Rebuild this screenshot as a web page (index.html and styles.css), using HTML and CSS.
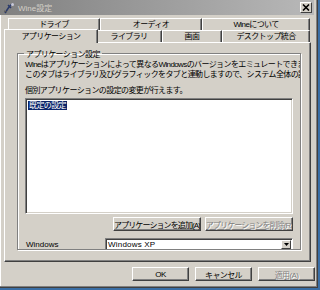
FILE: index.html
```html
<!DOCTYPE html>
<html lang="ja">
<head>
    <title>Wine設定</title>
    <link rel="stylesheet" href="styles.css">
</head>
<body>
    <div class="window">
        <div class="titlebar">
            <svg class="app-icon" width="12" height="12" viewBox="0 0 12 12">
                <path d="M2 11 L6 5 M6 5 L9 2 M5 3 L8 6" stroke="#2a3a6a" stroke-width="1.5" fill="none"/>
                <path d="M1 9 L4 10" stroke="#555" stroke-width="1"/>
                <circle cx="9.5" cy="2.5" r="1.5" fill="#c8c8d8"/>
            </svg>
            <span class="title">Wine設定</span>
            <div class="close-btn">
                <svg width="8" height="7" viewBox="0 0 8 7">
                    <path d="M1 0.5 L7 6.5 M7 0.5 L1 6.5" stroke="#000" stroke-width="1.6"/>
                </svg>
            </div>
        </div>

        <div class="content">
            <div class="tabs">
                <div class="tab-row back">
                    <div class="tab w-drive">ドライブ</div>
                    <div class="tab w-audio">オーディオ</div>
                    <div class="tab w-about">Wineについて</div>
                </div>
                <div class="tab-row front">
                    <div class="tab selected w-apps">アプリケーション</div>
                    <div class="tab w-libs">ライブラリ</div>
                    <div class="tab w-screen">画面</div>
                    <div class="tab w-desktop">デスクトップ統合</div>
                </div>
            </div>

            <div class="panel">
                <fieldset class="group">
                    <legend>アプリケーション設定</legend>
                    <p class="desc">Wineはアプリケーションによって異なるWindowsのバージョンをエミュレートできます。<br>このタブはライブラリ及びグラフィックをタブと連動しますので、システム全体の設定も変更されます。</p>
                    <p class="hint">個別アプリケーションの設定の変更が行えます。</p>
                    <div class="listbox">
                        <span class="item-selected">既定の設定</span>
                    </div>
                    <div class="list-buttons">
                        <button class="btn"><span>アプリケーションを追加(A)</span></button>
                        <button class="btn disabled"><span>アプリケーションを削除(R)</span></button>
                    </div>
                    <div class="version-row">
                        <span class="version-label">Windows</span>
                        <div class="combo">
                            <span class="combo-text">Windows XP</span>
                            <div class="combo-arrow">
                                <svg width="5" height="3" viewBox="0 0 5 3"><path d="M0 0 H5 L2.5 3 Z" fill="#000"/></svg>
                            </div>
                        </div>
                    </div>
                </fieldset>
            </div>

            <div class="dialog-buttons">
                <button class="btn wide"><span>OK</span></button>
                <button class="btn wide"><span>キャンセル</span></button>
                <button class="btn wide disabled"><span>適用(A)</span></button>
            </div>
        </div>
    </div>
</body>
</html>
```

FILE: styles.css
```css
body {
    margin: 0;
    padding: 0;
    width: 320px;
    height: 290px;
    background-color: #3a6ea5;
    overflow: hidden;
    font-family: "Liberation Sans", "Noto Sans CJK JP", sans-serif;
    font-size: 8px;
    color: #000;
}

.window {
    box-sizing: border-box;
    width: 318px;
    height: 288px;
    background-color: #d4d0c8;
    border-right: 1px solid #404040;
    border-bottom: 1px solid #404040;
    box-shadow: inset -1px -1px 0 #808080, inset 1px 0 0 #ffffff;
}

.titlebar {
    height: 15px;
    margin-right: 3px;
    background: linear-gradient(to right, #808080, #b8b8b8);
    display: flex;
    align-items: center;
    padding-left: 3px;
}

.app-icon {
    margin-right: 3px;
}

.title {
    color: #d4d0c8;
    font-size: 8px;
    flex: 1;
}

.close-btn {
    width: 10px;
    height: 9px;
    margin-right: 2px;
    background-color: #d4d0c8;
    border: 1px solid;
    border-color: #ffffff #404040 #404040 #ffffff;
    display: flex;
    align-items: center;
    justify-content: center;
}

.content {
    padding: 3px 6px 0 4px;
}

.tab-row {
    display: flex;
    height: 12px;
}

.tab-row.back {
    margin-left: 4px;
}

.tab-row.front {
    margin-left: 2px;
}

.tab {
    box-sizing: border-box;
    height: 12px;
    border-top: 1px solid #ffffff;
    border-left: 1px solid #ffffff;
    border-right: 1px solid #404040;
    box-shadow: inset -1px 0 0 #808080;
    text-align: center;
    line-height: 11px;
    letter-spacing: -0.6px;
}

.tab.selected {
    height: 14px;
    margin-top: -1px;
    margin-left: -2px;
    margin-right: -2px;
    position: relative;
    z-index: 1;
    background-color: #d4d0c8;
    padding-top: 1px;
}

.w-drive { width: 92px; }
.w-audio { width: 102px; }
.w-about { width: 108px; }
.w-apps { width: 94px; }
.w-libs { width: 66px; }
.w-screen { width: 60px; }
.w-desktop { width: 88px; }

.panel {
    height: 220px;
    box-sizing: border-box;
    border-top: 1px solid #ffffff;
    border-left: 1px solid #ffffff;
    border-right: 1px solid #404040;
    border-bottom: 1px solid #404040;
    box-shadow: inset -1px -1px 0 #808080;
    padding: 5px 9px 0 12px;
}

.group {
    margin: 0;
    min-width: 0;
    height: 202px;
    box-sizing: border-box;
    border: 1px solid #808080;
    box-shadow: 1px 1px 0 #ffffff, inset 1px 1px 0 #ffffff;
    padding: 0 7px 0 7px;
    overflow: hidden;
}

.group legend {
    padding: 0 2px;
    margin-left: -1px;
    letter-spacing: -0.6px;
}

.desc {
    margin: 1px 0 0 0;
    line-height: 10px;
    white-space: nowrap;
    letter-spacing: -0.6px;
}

.hint {
    margin: 6px 0 0 0;
    line-height: 10px;
    letter-spacing: -0.6px;
}

.listbox {
    margin-top: 2px;
    height: 116px;
    box-sizing: border-box;
    background-color: #ffffff;
    border: 1px solid;
    border-color: #808080 #ffffff #ffffff #808080;
    box-shadow: inset 1px 1px 0 #404040, inset -1px -1px 0 #d4d0c8;
    padding: 2px;
}

.item-selected {
    display: inline-block;
    background-color: #0a246a;
    color: #ffffff;
    line-height: 9px;
    padding: 0 1px;
    letter-spacing: -0.6px;
}

.list-buttons {
    display: flex;
    justify-content: flex-end;
    gap: 4px;
    margin-top: 3px;
}

.btn {
    font-family: inherit;
    font-size: 8px;
    box-sizing: border-box;
    height: 14px;
    padding: 0;
    background-color: #d4d0c8;
    border: 1px solid;
    border-color: #ffffff #404040 #404040 #ffffff;
    box-shadow: inset -1px -1px 0 #808080;
    letter-spacing: -0.6px;
    color: #000;
    white-space: nowrap;
    overflow: hidden;
    display: flex;
    align-items: center;
    justify-content: center;
}

.btn span {
    flex: none;
}

.list-buttons .btn {
    width: 88px;
    letter-spacing: -0.9px;
}

.btn.disabled {
    color: #808080;
    text-shadow: 1px 1px 0 #ffffff;
}

.version-row {
    display: flex;
    align-items: center;
    margin-top: 7px;
}

.version-label {
    width: 79px;
    padding-left: 1px;
}

.combo {
    flex: 1;
    height: 13px;
    box-sizing: border-box;
    background-color: #ffffff;
    border: 1px solid;
    border-color: #808080 #ffffff #ffffff #808080;
    box-shadow: inset 1px 1px 0 #404040;
    display: flex;
    align-items: center;
    padding-left: 2px;
}

.combo-text {
    flex: 1;
    letter-spacing: 0.2px;
}

.combo-arrow {
    width: 10px;
    height: 9px;
    margin-right: 1px;
    box-sizing: border-box;
    background-color: #d4d0c8;
    border: 1px solid;
    border-color: #ffffff #404040 #404040 #ffffff;
    display: flex;
    align-items: center;
    justify-content: center;
}

.dialog-buttons {
    display: flex;
    justify-content: flex-end;
    gap: 6px;
    margin-top: 5px;
    margin-right: -4px;
}

.btn.wide {
    width: 57px;
}
```
